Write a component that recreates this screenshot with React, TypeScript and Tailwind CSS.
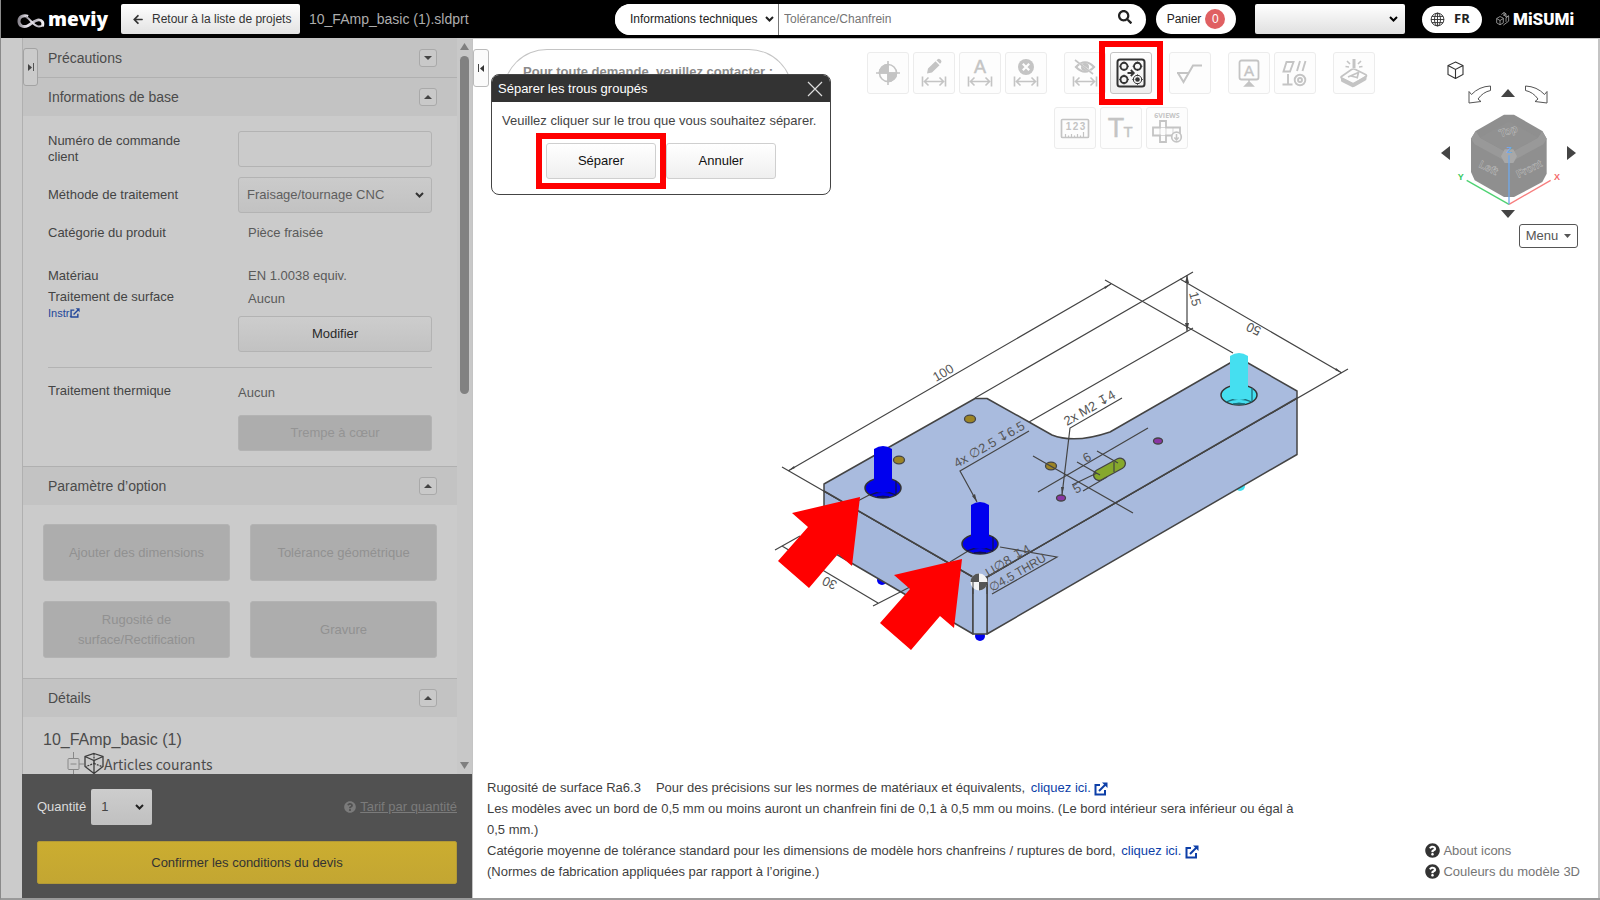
import type { ComponentProps, ReactNode } from "react";
import clsx from "clsx";
import { FaArrowLeft, FaQuestionCircle, FaSearch } from "react-icons/fa";

const NOTE_LINK = "text-[#0d3fa8]";
const FIELD_BORDER = "rounded-[3px] border border-[#b3b3b3]";

function ExternalIcon({ className }: { className?: string }) {
  return (
    <svg viewBox="0 0 14 14" className={className} fill="none" stroke="currentColor" strokeWidth="2" aria-hidden="true">
      <path d="M6 3H1.5v9.5H11V8" />
      <path d="M5 9 12 2" />
      <path d="M8 .5h5.5V6z" fill="currentColor" stroke="none" />
    </svg>
  );
}

function Triangle({ dir, className }: { dir: "up" | "down" | "left" | "right"; className?: string }) {
  const points = {
    up: "0,10 5,0 10,10",
    down: "0,0 10,0 5,10",
    left: "10,0 10,10 0,5",
    right: "0,0 10,5 0,10",
  }[dir];
  return (
    <svg viewBox="0 0 10 10" preserveAspectRatio="none" className={className} aria-hidden="true">
      <polygon points={points} fill="currentColor" />
    </svg>
  );
}

// select natif avec chevron dessiné par-dessus
function Select({ wrap, arrow, className, ...props }: ComponentProps<"select"> & { wrap: string; arrow: string }) {
  return (
    <div className={clsx("relative", wrap)}>
      <select className={clsx("size-full appearance-none", className)} {...props} />
      <svg
        viewBox="0 0 9 6"
        className={clsx("pointer-events-none absolute top-1/2 h-[6px] w-[9px] -translate-y-1/2", arrow)}
        fill="none"
        stroke="currentColor"
        strokeWidth="2"
        aria-hidden="true"
      >
        <path d="m1 1 3.500 3.500L8 1" />
      </svg>
    </div>
  );
}

/* ---------- header ---------- */

function Header() {
  return (
    <header className="flex h-[38px] shrink-0 items-center bg-black pl-4 pr-7">
      <a href="#" aria-label="meviy" className="flex w-[104px] items-center text-white">
        <svg viewBox="0 0 86 46" className="mt-1 h-[15px] w-7" fill="none" aria-hidden="true">
          <defs>
            <linearGradient id="ribbon" x1="0" x2="1">
              <stop offset="0" stopColor="#8b8790" />
              <stop offset=".35" stopColor="#e9e6ee" />
              <stop offset=".7" stopColor="#b5b1bb" />
              <stop offset="1" stopColor="#f4f2f6" />
            </linearGradient>
          </defs>
          <path
            d="M34 7C20 2 6 8 6 22c0 15 14 20 27 14 12-6 22-18 34-18 10 0 15 8 11 20"
            stroke="url(#ribbon)"
            strokeWidth="9"
          />
          <path d="M28 9c14 8 22 26 36 29 6 1 12-1 17-5" stroke="url(#ribbon)" strokeWidth="6" />
        </svg>
        <span className="ml-[3px] font-['Open_Sans'] text-[19px] font-extrabold leading-[30px]">meviy</span>
      </a>
      <a
        href="#"
        className="flex h-[30px] w-[179px] items-center whitespace-nowrap rounded-[2px] bg-linear-to-b from-white to-[#e2e2e2] pl-[11px] text-[12px] text-[#333]"
      >
        <FaArrowLeft className="mr-2 h-[11px] w-3" aria-hidden="true" />
        Retour à la liste de projets
      </a>
      <span className="ml-[9px] whitespace-nowrap text-[14px] text-[#adadad]">10_FAmp_basic (1).sldprt</span>

      <form className="ml-auto flex h-[31px] w-[531px] items-center overflow-hidden rounded-full bg-white text-[12px]">
        <Select
          aria-label="Catégorie de recherche"
          wrap="h-full w-[164px] border-r border-[#777]"
          arrow="right-[4px] text-[#222]"
          className="bg-white pl-[15px] text-[#222]"
        >
          <option>Informations techniques</option>
        </Select>
        <input
          aria-label="Recherche"
          placeholder="Tolérance/Chanfrein"
          className="h-full min-w-0 flex-1 px-[5px] outline-none placeholder:text-[#757575]"
        />
        <button type="button" aria-label="Rechercher" className="mb-1 mr-[14px] text-[#222]">
          <FaSearch className="size-[14px]" />
        </button>
      </form>

      <a href="#" className="ml-[10px] flex h-[30px] w-20 items-center justify-center gap-1 rounded-full bg-white text-[12px] text-[#222]">
        Panier
        <span className="flex size-5 items-center justify-center rounded-full bg-[#e06062] text-white">0</span>
      </a>
      <Select
        aria-label="Compte"
        wrap="ml-[19px] h-[30px] w-[150px]"
        arrow="right-[7px] text-black"
        className="rounded-[2px] bg-linear-to-b from-white to-[#e0e0e0] text-[13px]"
      />
      <button
        type="button"
        className="ml-[17px] flex h-[27px] w-[60px] items-center gap-[9px] rounded-full bg-white pl-2 font-['Open_Sans'] text-[13px] font-bold text-[#222]"
      >
        <svg viewBox="0 0 16 16" className="size-[15px]" fill="none" stroke="#333" aria-hidden="true">
          <circle cx="8" cy="8" r="6.8" />
          <ellipse cx="8" cy="8" rx="3.2" ry="6.8" />
          <path d="M8 1v14M1 8h14M2 4.700h12M2 11.300h12" />
        </svg>
        FR
      </button>
      <a href="#" aria-label="MiSUMi" className="ml-[14px] flex w-[76px] items-center gap-[3px] text-white">
        <svg viewBox="0 0 42 50" className="h-[17px] w-[14px] shrink-0" fill="none" stroke="#a5a5a5" strokeWidth="2.500" aria-hidden="true">
          <path d="M2 22 12 16l10 5v14l-10 6-10-6zM2 22l10 6 10-6M12 28v13" />
          <path d="M16 10 24 4l6 4v10l8-4v16L22 42M24 4v8l6 4M30 8l-8 5M38 14l-8 6v12" />
        </svg>
        <span className="font-['Liberation_Sans_Narrow',Roboto] text-[17px] font-black leading-5">MiSUMi</span>
      </a>
    </header>
  );
}

/* ---------- sidebar ---------- */

function SectionHeader({ title, open, first }: { title: string; open?: boolean; first?: boolean }) {
  return (
    <div
      className={clsx(
        "flex h-[39px] items-center justify-between border-t bg-[#c3c3c3] pl-[25px] pr-5",
        first ? "border-[#c3c3c3]" : "border-[#b0b0b0]",
      )}
    >
      <h2 className="text-[14px] text-[#4b4b4b]">{title}</h2>
      <button
        type="button"
        aria-label={title}
        aria-expanded={!!open}
        className="flex size-[18px] items-center justify-center rounded-[3px] border border-[#a9a9a9] bg-[#c9c9c9] text-[#444]"
      >
        <Triangle dir={open ? "up" : "down"} className="h-1 w-2" />
      </button>
    </div>
  );
}

function OptionButton({ children }: { children: ReactNode }) {
  return (
    <button
      type="button"
      disabled
      className="h-[57px] rounded-[3px] border border-[#b3b3b3] bg-[#adadad] px-6 leading-5 text-[#919191]"
    >
      {children}
    </button>
  );
}

function Sidebar() {
  return (
    <aside className="flex w-[471px] shrink-0 bg-[#cbcbcb] text-[13px] text-[#444]">
      <div className="w-[21px] shrink-0" />
      <div className="flex min-w-0 flex-1 flex-col border-l border-[#b0b0b0]">
        <div className="flex min-h-0 flex-1">
          <div className="relative min-w-0 flex-1 overflow-hidden">
            <button
              type="button"
              aria-label="Agrandir le panneau"
              className="absolute left-0 top-[10px] flex h-[38px] w-[15px] items-center justify-center rounded-[3px] border border-[#a3a3a3] bg-[#cbcbcb] text-[#444]"
            >
              <Triangle dir="right" className="h-[7px] w-1" />
              <span className="ml-[1px] h-2 w-px bg-[#555]" />
            </button>
            <SectionHeader title="Précautions" first />
            <SectionHeader title="Informations de base" open />

            <div className="flex h-[350px] flex-col px-[25px] pt-[15px]">
              <div className="flex h-9 items-center justify-between">
                <label htmlFor="order" className="w-[150px] leading-4">
                  Numéro de commande client
                </label>
                <input id="order" className={clsx("h-9 w-[194px] bg-[#cbcbcb] px-2", FIELD_BORDER)} />
              </div>
              <div className="mt-[10px] flex h-9 items-center justify-between">
                <label htmlFor="method">Méthode de traitement</label>
                <Select
                  id="method"
                  wrap="h-9 w-[194px]"
                  arrow="right-[8px] text-[#333]"
                  className={clsx("bg-linear-to-b from-[#cbcbcb] to-[#c2c2c2] px-2 text-[#5e5e5e]", FIELD_BORDER)}
                >
                  <option>Fraisage/tournage CNC</option>
                </Select>
              </div>
              <dl className="mt-[10px] grid grid-cols-[200px_1fr] leading-5 text-[#444]">
                <dt className="h-[43px]">Catégorie du produit</dt>
                <dd className="text-[#5a5a5a]">Pièce fraisée</dd>
                <dt className="h-[21px]">Matériau</dt>
                <dd className="text-[#5a5a5a]">EN 1.0038 equiv.</dd>
                <dt>
                  Traitement de surface
                  <a href="#" className="flex items-center text-[11px] leading-3 text-[#24489a]">
                    Instr.
                    <ExternalIcon className="-ml-[2px] size-[10px]" />
                  </a>
                </dt>
                <dd className="pt-[2px] text-[#5a5a5a]">Aucun</dd>
              </dl>
              <button
                type="button"
                className={clsx(
                  "-mt-[3px] h-9 w-[194px] shrink-0 self-end bg-linear-to-b from-[#cdcdcd] to-[#c2c2c2] text-[#2a2a2a]",
                  FIELD_BORDER,
                )}
              >
                Modifier
              </button>
              <hr className="mt-[15px] border-[#b3b3b3]" />
              <dl className="mt-[13px] grid grid-cols-[190px_1fr] leading-5">
                <dt>Traitement thermique</dt>
                <dd className="pt-[2px] text-[#5a5a5a]">Aucun</dd>
              </dl>
              <button
                type="button"
                disabled
                className="mt-3 h-9 w-[194px] shrink-0 self-end rounded-[3px] border border-[#b3b3b3] bg-[#adadad] text-[#949494]"
              >
                Trempe à cœur
              </button>
            </div>

            <SectionHeader title="Paramètre d’option" open />
            <div className="grid grid-cols-2 gap-5 px-5 pb-5 pt-[19px]">
              <OptionButton>Ajouter des dimensions</OptionButton>
              <OptionButton>Tolérance géométrique</OptionButton>
              <OptionButton>Rugosité de surface/Rectification</OptionButton>
              <OptionButton>Gravure</OptionButton>
            </div>

            <SectionHeader title="Détails" open />
            <div className="pl-5 pt-[11px] text-[#4b4b4b]">
              <p className="text-[16px] leading-6">10_FAmp_basic (1)</p>
              <div className="flex h-6 items-center pl-6">
                <svg viewBox="0 0 37 24" className="h-6 w-[37px]" fill="none" stroke="#888" aria-hidden="true">
                  <path d="M6.500 0v6M6.500 18v6M12 12h5" />
                  <rect x="1" y="6.500" width="11" height="11" rx="1" />
                  <path d="M3.500 12h6" />
                  <g stroke="#3c3c3c" strokeWidth="1.300">
                    <path d="m27 1.500 9 3v10l-9 7-9-7v-10z M18 4.500l9 4 9-4 M27 8.500v13" />
                    <path d="M27 1.500v10l-8 3M27 11.500l8 3" strokeDasharray="2 1" />
                  </g>
                </svg>
                <span className="font-['Noto_Sans_CJK_JP',sans-serif] text-[14px] leading-6">Articles courants</span>
              </div>
            </div>
          </div>

          {/* barre de défilement */}
          <div className="flex w-[15px] shrink-0 flex-col items-center bg-[#c8c8c8] py-[5px] text-[#7f7f7f]">
            <Triangle dir="up" className="h-[7px] w-[9px]" />
            <div className="mt-[6px] h-[338px] w-[9px] rounded-full bg-[#818181]" />
            <Triangle dir="down" className="mt-auto h-[7px] w-[9px]" />
          </div>
        </div>

        <div className="-ml-px h-[124px] shrink-0 bg-[#515151] px-[15px] pt-[15px]">
          <div className="flex items-center">
            <label htmlFor="qty" className="mr-[5px] text-[#dcdcdc]">
              Quantité
            </label>
            <Select
              id="qty"
              wrap="h-9 w-[61px]"
              arrow="right-[8px] text-[#222]"
              className="rounded-[2px] bg-linear-to-b from-[#cdcdcd] to-[#c0c0c0] px-[10px] text-[#444]"
            >
              <option>1</option>
            </Select>
            <a href="#" className="ml-auto flex items-center gap-1 text-[#7b7b7b]">
              <FaQuestionCircle className="size-3" />
              <span className="underline">Tarif par quantité</span>
            </a>
          </div>
          <button
            type="button"
            className="mt-4 h-[43px] w-full rounded-[2px] border border-[#b39a36] bg-linear-to-b from-[#cbad30] to-[#c3a632] text-[#333]"
          >
            Confirmer les conditions du devis
          </button>
        </div>
      </div>
    </aside>
  );
}

/* ---------- toolbar ---------- */

// flèche de cote sous l'icône principale
const Dim = () => <path d="M9.500 24.500v10M32.500 24.500v10M11 29.500h20M15.500 25.500l-4 4 4 4M26.500 25.500l4 4-4 4" fill="none" />;

const ICONS: Record<string, ReactNode> = {
  origin: (
    <>
      <circle cx="21" cy="21" r="8.500" fill="none" />
      <path d="M21 9v24M9 21h24" fill="none" />
      <path d="M21 12.500V21h-8.500A8.500 8.500 0 0 1 21 12.500zM21 29.500V21h8.500a8.500 8.500 0 0 1-8.500 8.500z" />
    </>
  ),
  edit: (
    <>
      <path stroke="none" d="M14 21.500l1-5 7.500-7.300 4 4-7.500 7.300zM23.500 8.200l1.200-1q1.300-.8 2.500.3l.8.8q1 1.300 0 2.500l-1 1z" />
      <Dim />
    </>
  ),
  label: (
    <>
      <text x="21" y="21" fontSize="18" textAnchor="middle" stroke="currentColor" strokeWidth=".5" fontFamily="Liberation Sans">A</text>
      <Dim />
    </>
  ),
  remove: (
    <>
      <circle cx="21" cy="15" r="8" stroke="none" />
      <path d="M17.800 11.800l6.400 6.400M24.200 11.800l-6.400 6.400" stroke="#fdfdfd" strokeWidth="2.200" />
      <Dim />
    </>
  ),
  hide: (
    <>
      <path d="M12 15q9-9.500 18 0-9 9.500-18 0z" fill="none" strokeWidth="2.200" />
      <circle cx="21" cy="15" r="4" stroke="none" />
      <path d="M12 9l19 14" stroke="#fdfdfd" strokeWidth="2" />
      <path d="M11 8l18 14" />
      <Dim />
    </>
  ),
  split: (
    <>
      <rect x="7.500" y="7.500" width="27" height="27" rx="2.500" fill="none" strokeWidth="2" />
      <g fill="none">
        <circle cx="14" cy="14.300" r="3.500" strokeWidth="1.900" />
        <circle cx="27.500" cy="14.300" r="3.500" strokeWidth="1.900" />
        <circle cx="14" cy="27.500" r="3.500" strokeWidth="1.900" />
        <circle cx="27.500" cy="27.500" r="4.200" strokeWidth="1" />
        <path strokeWidth=".8" d="M14 9.500v2M14 17.500v1.500M9 14.300h2M17.500 14.300h1.500M27.500 9.500v2M27.500 17.500v1.500M22.500 14.300h2M31 14.300h1.500M14 22.500v2M14 31v1.500M9 27.500h2M17.500 27.500h1.500M27.500 22.300v2M27.500 31v2M22.300 27.500h2M31 27.500h2" />
      </g>
      <circle cx="27.500" cy="27.500" r="2.300" stroke="none" />
      <path d="M17.500 21h6M20.800 18l3 3-3 3" fill="none" strokeWidth="1.800" />
    </>
  ),
  rough: <path d="M8 21h12M9 21l5.500 9 9.500-16.500h9" fill="none" strokeWidth="2" />,
  note: (
    <>
      <rect x="11.500" y="8.500" width="19" height="19" rx="2" fill="none" strokeWidth="1.800" />
      <text x="21" y="23.500" fontSize="15" textAnchor="middle" stroke="currentColor" strokeWidth=".4" fontFamily="Liberation Sans">A</text>
      <path d="M21 28v4M17 34l4-4 4 4z" />
    </>
  ),
  tolerance: (
    <g fill="none" strokeWidth="1.900">
      <path d="M12.500 10h7L16 19.500H9.500zM26 9l-3 10M31.500 9l-3 10M14 22v10M8.500 32.500h10" />
      <circle cx="26" cy="28" r="5.300" />
      <circle cx="26" cy="28" r="2" />
    </g>
  ),
  engrave: (
    <>
      <path d="M21 7v9" strokeWidth="3" />
      <path d="M14 9l3 3M28 9l-3 3M12.500 14.500l3.500.5M29.500 14.500l-3.500.5" />
      <path d="M8.500 24.500l10-7q2-1 4 0l10 5q2 1 0 2.500l-11 6q-1.500 1-3 0l-10-5q-1-.7 0-1.500z" fill="none" strokeWidth="1.700" />
      <path d="M8 25v3.500q0 1 1 1.500l10 5q1 .5 2.500-.3l11-6.200q1-.6 1-1.500v-4L20.500 31.500z" stroke="none" />
      <path d="M15 25l10.500-4.500-1.500 6M18 24l6 1.500" fill="none" strokeWidth="1.700" />
    </>
  ),
  ruler: (
    <>
      <rect x="7.500" y="12.500" width="27" height="18" rx="1" fill="none" strokeWidth="1.700" />
      <g fontSize="10" stroke="none" fontWeight="700" textAnchor="middle" fontFamily="Liberation Sans">
        <text x="14.500" y="23">1</text>
        <text x="21.500" y="23">2</text>
        <text x="28.500" y="23">3</text>
      </g>
      <path d="M11.500 27v3M14.500 28.500v2M17.500 27v3M20.500 28.500v2M23.500 27v3M26.500 28.500v2M29.500 25v5" strokeWidth="1.200" />
    </>
  ),
  size: (
    <g strokeWidth=".4" fontFamily="Liberation Sans">
      <text x="16" y="30" fontSize="27" textAnchor="middle">T</text>
      <text x="28" y="30" fontSize="15" textAnchor="middle">T</text>
    </g>
  ),
  views: (
    <>
      <text x="21" y="11" fontSize="7" fontWeight="700" textAnchor="middle" stroke="none" fontFamily="Open Sans">6VIEWS</text>
      <path d="M14 14h6v6.500h14v8H20V35h-6v-6.500H7v-8h7z" fill="none" strokeWidth="1.800" />
      <path d="M14 20.500h6v8h-6zM27 20.500v8" fill="none" strokeWidth=".7" />
      <circle cx="30.500" cy="30" r="4.800" fill="#fdfdfd" strokeWidth="1.700" />
      <path d="M30.500 27v5.500M28.300 30.500l2.200 2.300 2.200-2.300" fill="none" strokeWidth="1.500" />
    </>
  ),
};

const ROW_ONE: { id: string; label: string }[][] = [
  [
    { id: "origin", label: "Origine" },
    { id: "edit", label: "Modifier la cote" },
    { id: "label", label: "Texte de cote" },
    { id: "remove", label: "Supprimer la cote" },
  ],
  [
    { id: "hide", label: "Masquer la cote" },
    { id: "split", label: "Séparer les trous groupés" },
  ],
  [{ id: "rough", label: "Rugosité" }],
  [
    { id: "note", label: "Annotation" },
    { id: "tolerance", label: "Tolérance géométrique" },
  ],
  [{ id: "engrave", label: "Gravure" }],
];

const ROW_TWO = [
  { id: "ruler", label: "Mesure" },
  { id: "size", label: "Taille du texte" },
  { id: "views", label: "6 vues" },
];

function ToolButton({ id, label }: { id: string; label: string }) {
  const active = id === "split";
  return (
    <div className="relative">
      <button
        type="button"
        aria-label={label}
        className={clsx(
          "block size-[42px] rounded-[3px] border",
          active ? "border-[#c4c4c4] bg-linear-to-b from-white to-[#eee] text-[#333]" : "border-[#ececec] bg-[#fdfdfd] text-[#c4c4c4]",
        )}
      >
        <svg viewBox="1 1 40 40" className="size-10" fill="currentColor" stroke="currentColor" strokeWidth="1.600" aria-hidden="true">
          {ICONS[id]}
        </svg>
      </button>
      {active && <div className="pointer-events-none absolute -inset-[11px] z-10 border-6 border-[#f00]" />}
    </div>
  );
}

function Toolbar() {
  return (
    <div className="mt-[13px] flex flex-col items-center gap-[13px]">
      <div className="flex gap-[17px]">
        {ROW_ONE.map((group) => (
          <div key={group[0].id} className="flex gap-1">
            {group.map((tool) => (
              <ToolButton key={tool.id} {...tool} />
            ))}
          </div>
        ))}
      </div>
      <div className="flex gap-1">
        {ROW_TWO.map((tool) => (
          <ToolButton key={tool.id} {...tool} />
        ))}
      </div>
    </div>
  );
}

/* ---------- view cube ---------- */

function ViewCube() {
  return (
    <div className="mr-5 mt-[22px] flex w-[137px] flex-col text-[#444]">
      <button type="button" aria-label="Vue isométrique" className="ml-[6px] w-[17px]">
        <svg viewBox="0 0 17 18" className="h-[18px] w-[17px]" fill="none" stroke="#333" strokeWidth="1.100" aria-hidden="true">
          <path d="M8.500 1 16 4.500v9l-7.500 4-7.500-4v-9zM1 4.500l7.500 4 7.500-4M8.500 8.500v9" />
        </svg>
      </button>
      <div className="mt-[6px] flex items-start justify-center gap-[9px] pr-[3px]">
        <button type="button" aria-label="Rotation gauche">
          <svg viewBox="0 0 24 19" className="h-[19px] w-6" fill="none" stroke="#555" aria-hidden="true">
            <path d="M22.500 1v4.500Q15 7 10 14l3 2.500-12 1.500V6.500l2.500 3Q11 1.500 22.500 1z" />
          </svg>
        </button>
        <button type="button" aria-label="Vers le haut" className="mt-1">
          <Triangle dir="up" className="h-2 w-[14px]" />
        </button>
        <button type="button" aria-label="Rotation droite">
          <svg viewBox="0 0 24 19" className="h-[19px] w-6" fill="none" stroke="#555" aria-hidden="true">
            <path d="M1.500 1v4.500Q9 7 14 14l-3 2.500 12 1.500V6.500l-2.500 3Q13 1.500 1.500 1z" />
          </svg>
        </button>
      </div>
      <div className="mt-[9px] flex items-start justify-between pr-[2px]">
        <button type="button" aria-label="Vers la gauche" className="mt-[33px]">
          <Triangle dir="left" className="h-[14px] w-[9px]" />
        </button>
        <svg viewBox="763 338 324 276" className="h-[92px] w-[108px]" aria-hidden="true">
          <polygon points="910,343 940,343 1025,392 1038,415 1038,520 1025,545 940,590 910,590 822,540 811,515 811,415 825,392" fill="#8f8f8f" />
          <path d="M825 392 838 412 912 453 938 453 1012 412 1025 392 1038 415 1028 432 948 475 925 490 902 475 822 432 811 415z" fill="#999" />
          <path d="M838 412 912 370q13-7 26 0l74 42-74 41h-26z" fill="#919191" />
          <polygon points="912,447 938,447 949,468 938,488 912,488 901,468" fill="#a8a8a8" />
          <g fontFamily="Liberation Sans" fontSize="32" fontWeight="700" fill="#878787" stroke="#bdbdbd" strokeWidth="1.500" textAnchor="middle">
            <text transform="translate(926 402) rotate(-18)">Top</text>
            <text transform="translate(859 512) rotate(26)">Left</text>
            <text transform="translate(990 515) rotate(-26)">Front</text>
          </g>
          <g fill="none" strokeWidth="4">
            <path d="M798 540 925 612" stroke="#4fd273" />
            <path d="M1050 540 925 612" stroke="#f77e7e" />
            <path d="M925 465V612" stroke="#6fa8ea" />
          </g>
          <g fontFamily="Liberation Sans" fontSize="27" fontWeight="700" textAnchor="middle">
            <text x="780" y="539" fill="#35c85c">Y</text>
            <text x="1069" y="539" fill="#f56b6b">X</text>
            <text x="926" y="457" fill="#6fa8ea">Z</text>
          </g>
        </svg>
        <button type="button" aria-label="Vers la droite" className="mt-[33px]">
          <Triangle dir="right" className="h-[14px] w-[9px]" />
        </button>
      </div>
      <button type="button" aria-label="Vers le bas" className="mr-[3px] mt-[5px] self-center">
        <Triangle dir="down" className="h-2 w-[14px]" />
      </button>
      <button
        type="button"
        className="mt-[6px] flex h-6 w-[59px] items-center justify-center gap-[6px] self-end rounded-[3px] border border-[#555] bg-white text-[13px] text-[#555]"
      >
        Menu
        <Triangle dir="down" className="h-1 w-[7px]" />
      </button>
    </div>
  );
}

/* ---------- model ---------- */

const RED_ARROW = "860,497 792,513 808,527 778,561 809,588 838,554 852,566";

function Pin({ x, y, color, dark }: { x: number; y: number; color: string; dark: string }) {
  return (
    <g>
      <ellipse cx={x} cy={y} rx="18" ry="10" fill={color} stroke="#333" strokeWidth="1.500" />
      <path d={`M${x - 13} ${y + 7}q13-6 26 0M${x + 13} ${y - 7}v13`} fill="none" stroke={dark} strokeWidth="1.300" />
      <path d={`M${x - 6} ${y + 9}q6-2 12 0z`} fill={dark} stroke={dark} />
      <path d={`M${x - 9} ${y - 39}q9-6 18 0V${y + 3}q-9 4-18 0z`} fill={color} />
    </g>
  );
}

function Model() {
  return (
    <svg viewBox="770 260 590 400" className="h-[400px] w-[590px]" role="img" aria-label="Modèle 3D">
      {/* goupilles débouchantes sous la plaque */}
      <circle cx="882" cy="580" r="5" fill="#0000f0" />
      <circle cx="980" cy="636" r="5" fill="#0000f0" />
      <circle cx="1240" cy="486" r="5" fill="#3fe0f0" />

      {/* plaque */}
      <g stroke="#444" strokeWidth="1.500" strokeLinejoin="round">
        <path d="M824 491 973 577v57L824 547z" fill="#a5b8dc" />
        <path d="M987 577 1297 398v56.500L987 634z" fill="#a8badd" />
        <path d="M973 577h14v57h-14z" fill="#b0c4e6" />
        <path
          d="M824 484 975 398.500h12L1029 422l23 13q23 9 58-3L1230 363l9-4 9 4 49 28v7L987 577h-14L824 491z"
          fill="#a9bbde"
        />
      </g>

      {/* perçages */}
      <g stroke="#444" strokeWidth="1.300">
        <ellipse cx="970" cy="419" rx="5.500" ry="3.800" fill="#9c8425" />
        <ellipse cx="899" cy="460" rx="5.500" ry="3.800" fill="#9c8425" />
        <ellipse cx="1051" cy="466" rx="5.500" ry="3.800" fill="#9c8425" />
        <ellipse cx="1158" cy="441" rx="4.500" ry="3" fill="#8a35a5" />
        <ellipse cx="1061" cy="498" rx="4.500" ry="3" fill="#8a35a5" />
      </g>
      <path d="M1099 475 1120 463.500" stroke="#444" strokeWidth="12" strokeLinecap="round" />
      <path d="M1099 475 1120 463.500" stroke="#86a82c" strokeWidth="9.500" strokeLinecap="round" />

      {/* lignes de cote */}
      <g stroke="#444" strokeWidth="1.200" fill="none">
        <path d="M788 471 1111 284M782 467 973 577M1105 280 1233 353M1193 272 975 398M1193 328 1029 422" />
        <path d="M1187 275v56M1180 279 1342 373M1348 369 987 577" />
        <path d="M775 550 800 536M782 546 878 603M873 606 910 587" />
        <path d="M977 502 960 471 1029 431M1062 495 1070 428 1122 398" />
        <path d="M1033 456 1133 513M1148 428 1038 492" />
        <path d="M1077 462 1100 475M1097 451 1118 463M1072 485 1097 473M1083 491 1107 477M1114 462v10" />
        <path d="M1000 547 1057 557 992 594M950 562 973 548M852 504 873 493" />
      </g>
      <g fill="#444">
        <path d="M977 502l-5-6 3-2zM1062 495l-1-8h3zM1187 275l-2 8h4zM1187 331l-2-8h4zM788 471l6-5 1 2zM1111 284l-7 3 1 2zM1342 373l-7-3 1-2z" />
      </g>

      <Pin x={1239} y={395} color="#45dff0" dark="#1b6f7c" />
      <Pin x={883} y={488} color="#0000ee" dark="#111155" />
      <Pin x={980} y={544} color="#0000ee" dark="#111155" />

      {/* origine */}
      <circle cx="979" cy="582" r="8.500" fill="#f4f4f4" />
      <path d="M979 573.500v8.500h-8.500a8.500 8.500 0 0 1 8.500-8.500zM979 590.500V582h8.500a8.500 8.500 0 0 1-8.500 8.500z" fill="#555" />
      <path d="M973 582v12M987 582v12" stroke="#444" />

      <g fontFamily="Liberation Sans, DejaVu Sans, sans-serif" fontSize="13" fill="#555">
        <text transform="translate(936 382) rotate(-30)">100</text>
        <text transform="translate(957 468) rotate(-30)">4x ∅2.5 ↧6.5</text>
        <text transform="translate(1067 426) rotate(-30)">2x M2 ↧4</text>
        <text transform="translate(1189 293) rotate(75)">15</text>
        <text transform="translate(1262 328) rotate(205)">50</text>
        <text transform="translate(838 582) rotate(205)">30</text>
        <text transform="translate(988 577) rotate(-30)">⊔∅8 ↧4</text>
        <text transform="translate(992 592) rotate(-30)" fontSize="12">∅4.5 THRU</text>
        <text transform="translate(1086 463) rotate(-30)">6</text>
        <text transform="translate(1076 494) rotate(-30)">5</text>
      </g>

      <polygon points={RED_ARROW} fill="#f00" />
      <polygon points={RED_ARROW} fill="#f00" transform="translate(102 62)" />
    </svg>
  );
}

/* ---------- dialog ---------- */

function SplitDialog() {
  const button =
    "h-9 w-[110px] rounded-[3px] border border-[#cfcfcf] bg-linear-to-b from-white to-[#efefef] text-[#111]";
  return (
    <div
      role="dialog"
      aria-label="Séparer les trous groupés"
      className="absolute left-[18px] top-[35px] z-20 w-[340px] overflow-hidden rounded-lg border border-[#444] bg-white pb-[15px] text-[13px]"
    >
      <div className="flex h-[27px] items-center justify-between bg-[#333] pl-[6px] pr-[7px] text-white">
        <h2>Séparer les trous groupés</h2>
        <button type="button" aria-label="Fermer">
          <svg viewBox="0 0 16 16" className="size-4" stroke="#ddd" strokeWidth="1.200" aria-hidden="true">
            <path d="M1 1l14 14M15 1 1 15" />
          </svg>
        </button>
      </div>
      <p className="mt-[9px] pl-[10px] leading-5 text-[#444]">Veuillez cliquer sur le trou que vous souhaitez séparer.</p>
      <div className="mt-3 flex justify-center gap-[10px]">
        <div className="relative">
          <button type="button" className={button}>
            Séparer
          </button>
          <div className="pointer-events-none absolute -inset-[10px] border-6 border-[#f00]" />
        </div>
        <button type="button" className={button}>
          Annuler
        </button>
      </div>
    </div>
  );
}

export default function App() {
  return (
    <div className="flex h-screen min-h-[700px] flex-col overflow-hidden border-b-2 border-l border-b-[#9a9a9a] border-l-[#8a8a8a] bg-white font-['Liberation_Sans',Arial,sans-serif]">
      <Header />
      <div className="flex min-h-0 flex-1">
        <Sidebar />
        <main className="relative flex min-w-0 flex-1 flex-col border-l border-r-2 border-t border-[#c4c4c4] bg-white">
          <div className="flex items-start">
            <button
              type="button"
              aria-label="Réduire le panneau"
              className="mt-[10px] flex h-[38px] w-4 shrink-0 items-center justify-center rounded-[3px] border border-[#bbb] bg-[#fbfbfb] text-[#333]"
            >
              <span className="mr-[1px] h-2 w-px bg-[#444]" />
              <Triangle dir="left" className="h-[7px] w-1" />
            </button>
            <div className="ml-[14px] mt-[10px] h-11 w-[290px] shrink-0 rounded-t-full border border-b-0 border-[#c4c4c4] pt-3 text-center text-[13px] font-bold leading-5 text-[#8a8a8a]">
              Pour toute demande, veuillez contacter :
            </div>
            <div className="ml-auto mr-[66px]">
              <Toolbar />
            </div>
            <ViewCube />
          </div>

          <SplitDialog />

          <div className="mt-3 flex justify-center pl-[58px]">
            <Model />
          </div>

          <footer className="mb-[16px] mt-auto flex items-end justify-between pl-[14px] pr-[18px] text-[13px] leading-[21px] text-[#3f3f3f]">
            <div className="max-w-[820px]">
              <p>
                Rugosité de surface Ra6.3<span className="ml-[15px]">Pour des précisions sur les normes de matériaux et équivalents,</span>{" "}
                <a href="#" className={clsx("ml-[2px]", NOTE_LINK)}>
                  cliquez ici. <ExternalIcon className="inline size-[14px]" />
                </a>
              </p>
              <p>
                Les modèles avec un bord de 0,5 mm ou moins auront un chanfrein fini de 0,1 à 0,5 mm ou moins. (Le bord
                intérieur sera inférieur ou égal à 0,5 mm.)
              </p>
              <p>
                Catégorie moyenne de tolérance standard pour les dimensions de modèle hors chanfreins / ruptures de bord,{" "}
                <a href="#" className={clsx("ml-[2px]", NOTE_LINK)}>
                  cliquez ici. <ExternalIcon className="inline size-[14px]" />
                </a>
              </p>
              <p>(Normes de fabrication appliquées par rapport à l’origine.)</p>
            </div>
            <ul className="text-[#757575]">
              {["About icons", "Couleurs du modèle 3D"].map((item) => (
                <li key={item}>
                  <a href="#" className="flex items-center gap-[3px]">
                    <FaQuestionCircle className="size-[15px] text-[#333]" />
                    {item}
                  </a>
                </li>
              ))}
            </ul>
          </footer>
        </main>
      </div>
    </div>
  );
}
